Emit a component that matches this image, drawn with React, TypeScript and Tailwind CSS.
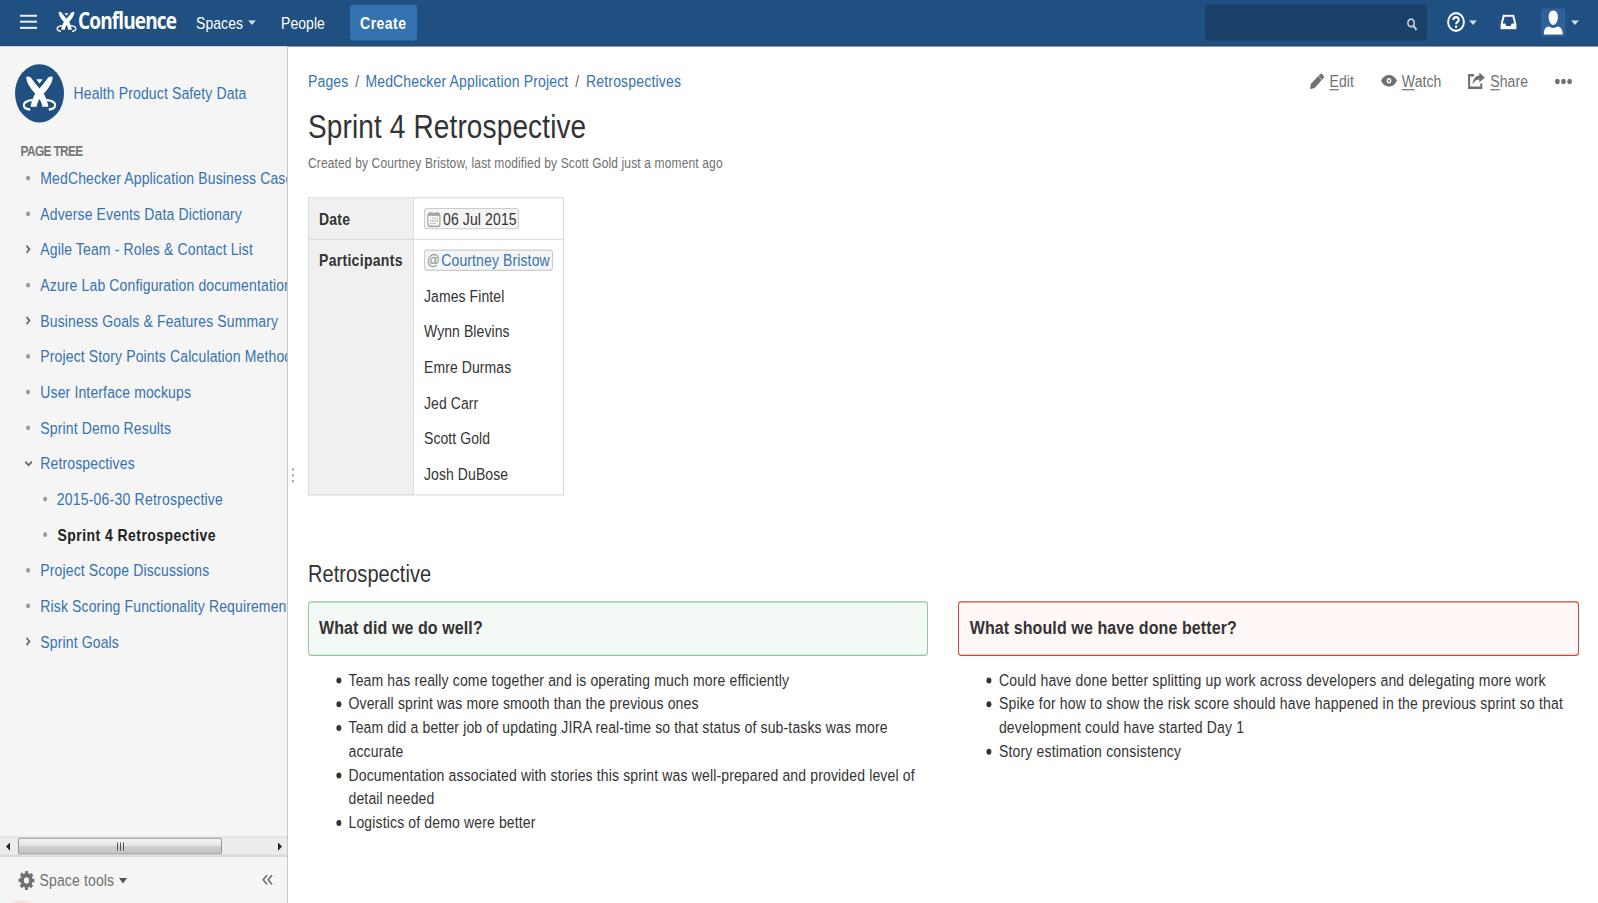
import React from "react";

type TreeItem = {
  label: string;
  kind: "leaf" | "closed" | "open";
  nested?: boolean;
  current?: boolean;
};

const tree: TreeItem[] = [
  { label: "MedChecker Application Business Case", kind: "leaf" },
  { label: "Adverse Events Data Dictionary", kind: "leaf" },
  { label: "Agile Team - Roles & Contact List", kind: "closed" },
  { label: "Azure Lab Configuration documentation", kind: "leaf" },
  { label: "Business Goals & Features Summary", kind: "closed" },
  { label: "Project Story Points Calculation Method", kind: "leaf" },
  { label: "User Interface mockups", kind: "leaf" },
  { label: "Sprint Demo Results", kind: "leaf" },
  { label: "Retrospectives", kind: "open" },
  { label: "2015-06-30 Retrospective", kind: "leaf", nested: true },
  { label: "Sprint 4 Retrospective", kind: "leaf", nested: true, current: true },
  { label: "Project Scope Discussions", kind: "leaf" },
  { label: "Risk Scoring Functionality Requirements", kind: "leaf" },
  { label: "Sprint Goals", kind: "closed" },
];

const participants = ["James Fintel", "Wynn Blevins", "Emre Durmas", "Jed Carr", "Scott Gold", "Josh DuBose"];

const wentWell = [
  "Team has really come together and is operating much more efficiently",
  "Overall sprint was more smooth than the previous ones",
  "Team did a better job of updating JIRA real-time so that status of sub-tasks was more accurate",
  "Documentation associated with stories this sprint was well-prepared and provided level of detail needed",
  "Logistics of demo were better",
];

const doBetter = [
  "Could have done better splitting up work across developers and delegating more work",
  "Spike for how to show the risk score should have happened in the previous sprint so that development could have started Day 1",
  "Story estimation consistency",
];

function Mark({ className }: { className: string }) {
  const limb = "M11.2 11.4Q11.8 9.6 15.9 11.3C18.6 14.8 21.8 18 25 20.8C29.4 24.8 32 29 33.4 35.8H27.4C26.6 32 25 29.4 21.6 26C16.4 21.4 12.2 17 11.2 11.4Z";
  const swirl = "M17.6 30.1C11 30.9 8.4 32.6 8.8 34.8C9.2 37 12 38 15.2 38.2";
  return (
    <svg viewBox="7 9 35 31" preserveAspectRatio="none" className={className} fill="#fff">
      <path d={limb} />
      <path d={limb} transform="translate(49 0) scale(-1 1)" />
      <path d={swirl} fill="none" stroke="#fff" strokeWidth="2" />
      <path d={swirl} fill="none" stroke="#fff" strokeWidth="2" transform="translate(49 0) scale(-1 1)" />
      <path d="M21.3 12.6H27.7L24.5 16.2Z" />
    </svg>
  );
}

function Caret({ className }: { className: string }) {
  return (
    <svg viewBox="0 0 8 4" preserveAspectRatio="none" className={className} fill="currentColor">
      <path d="M0 0H8L4 4Z" />
    </svg>
  );
}

function Marker({ kind }: { kind: TreeItem["kind"] }) {
  return (
    <svg viewBox="0 0 10 10" className="h-[10px] w-[10px] shrink-0">
      {kind === "leaf" && <circle cx="5.1" cy="5" r="2" fill="#999" />}
      {kind === "closed" && <path d="M3.5 1.8L6.5 4.8L3.5 7.8" fill="none" stroke="#666" strokeWidth="1.6" />}
      {kind === "open" && <path d="M2.3 3.6L5.6 6.6L8.9 3.6" fill="none" stroke="#666" strokeWidth="1.6" />}
    </svg>
  );
}

function Header() {
  return (
    <header className="flex h-[39.3px] shrink-0 items-start border-b border-[#2e4766] bg-[#205081] pt-[3.5px] text-white">
      <div className="flex h-[30px] w-full items-center">
        <svg viewBox="0 0 17 13" className="ml-[20px] h-[13px] w-[17px] shrink-0" fill="#e9eef3">
          <rect y="0.4" width="17" height="1.7" />
          <rect y="5.4" width="17" height="1.7" />
          <rect y="10.6" width="17" height="1.7" />
        </svg>
        <Mark className="ml-[19px] mt-[-1px] h-[18.5px] w-[21px] shrink-0" />
        <div className="ml-px w-[98px] shrink-0 whitespace-nowrap font-['Open_Sans',sans-serif] text-[19px] font-bold leading-[30px] tracking-[-0.87px]">
          <span className="relative top-[-1.5px]">Confluence</span>
        </div>
        <div className="ml-[20px] flex w-[60px] shrink-0 items-center justify-between">
          <span>Spaces</span>
          <Caret className="h-[4px] w-[8px] text-[#d4dde6]" />
        </div>
        <span className="ml-[25px] w-[45px] shrink-0">People</span>
        <div className="ml-[23.5px] flex h-[30px] w-[67.5px] shrink-0 items-center justify-center rounded-[3px] bg-[#3572b0] font-bold tracking-[0.45px]">
          Create
        </div>
        <div className="ml-auto flex h-[30px] w-[222px] shrink-0 items-center justify-end rounded-[3px] bg-[#1a4067] pr-[9px]">
          <svg viewBox="0 0 12 12" className="mt-[3px] h-[11px] w-[12px]" fill="none" stroke="#b9c6d3">
            <circle cx="5" cy="4.7" r="3.5" strokeWidth="1.8" />
            <path d="M7.5 7.3L11 11" strokeWidth="2.2" />
          </svg>
        </div>
        <svg viewBox="0 0 18 18" className="ml-[20px] h-[17px] w-[18px] shrink-0" fill="none" stroke="#fff" preserveAspectRatio="none">
          <circle cx="9" cy="9" r="7.9" strokeWidth="1.9" />
          <path d="M6.3 7.2C6.3 3.9 11.8 3.9 11.8 7C11.8 9 9.1 9 9.1 11" strokeWidth="2" />
          <path d="M9.1 12.2V14.2" strokeWidth="2.1" />
        </svg>
        <Caret className="ml-[4px] h-[4px] w-[8px] shrink-0 text-[#d4dde6]" />
        <svg viewBox="0 0 17 14" className="ml-[23.5px] h-[13px] w-[17px] shrink-0">
          <path fill="#fff" fillRule="evenodd" d="M2.5 0.5H14.5L17 9V13.5H0V9ZM4.3 2.2L2.3 8.3H5L6.2 10.6H10.8L12 8.3H14.7L12.7 2.2Z" />
        </svg>
        <svg viewBox="0 0 24 24" className="ml-[24px] h-[24px] w-[24.5px] shrink-0" preserveAspectRatio="none">
          <rect width="24" height="24" rx="3" fill="#2d6198" />
          <path fill="#fff" d="M12 1.8C15 1.8 16.7 4.2 16.5 7.6C16.3 11.2 14.5 14 12 14S7.7 11.2 7.5 7.6C7.3 4.2 9 1.8 12 1.8ZM2.8 22C2.9 17.5 4.5 15.7 8 15.4C9.6 17 14.4 17 16 15.4C19.5 15.7 21.1 17.5 21.2 22Z" />
        </svg>
        <Caret className="ml-[5px] mr-[19.5px] h-[4px] w-[8px] shrink-0 text-[#d4dde6]" />
      </div>
    </header>
  );
}

function ScrollBar() {
  return (
    <div className="flex h-[16px] shrink-0 items-center border-y border-[#dedede] bg-[#ececec]">
      <svg viewBox="0 0 4 8" preserveAspectRatio="none" className="ml-[6px] h-[7px] w-[4px]">
        <path d="M4 0V8L0 4Z" fill="#222" />
      </svg>
      <div className="ml-[8px] flex h-[14.5px] w-[204px] items-center justify-center gap-[2px] rounded-[2px] border border-[#979797] bg-[linear-gradient(#f4f4f4_0%,#e6e6e6_48%,#cfcfd1_52%,#c4c4c6_100%)]">
        <i className="h-[7px] w-px bg-[#555]" />
        <i className="h-[7px] w-px bg-[#555]" />
        <i className="h-[7px] w-px bg-[#555]" />
      </div>
      <svg viewBox="0 0 4 8" preserveAspectRatio="none" className="ml-auto mr-[5px] h-[7px] w-[4px]">
        <path d="M0 0V8L4 4Z" fill="#222" />
      </svg>
    </div>
  );
}

function Sidebar() {
  return (
    <aside className="relative flex w-[288px] shrink-0 flex-col overflow-hidden border-r border-[#c6c6c6] bg-[#f5f5f5]">
      <div className="flex items-center pl-[15px] pt-[14.8px]">
        <div className="flex h-[48.5px] w-[49px] items-center justify-center rounded-full bg-[#205081]">
          <Mark className="h-[31px] w-[35px]" />
        </div>
        <span className="ml-[9.5px] tracking-[0.13px] text-[#3572b0]">Health Product Safety Data</span>
      </div>
      <h2 className="mt-[14.2px] pl-[20.5px] text-[12px] font-bold leading-[20px] tracking-[-0.7px] text-[#777]">PAGE TREE</h2>
      <ul className="mt-[-1.5px] flex flex-col">
        {tree.map((item) => (
          <li
            key={item.label}
            className={
              item.nested
                ? "flex h-[30px] items-center whitespace-nowrap pl-[39.5px]"
                : "flex h-[30px] items-center whitespace-nowrap pl-[23px]"
            }
          >
            <Marker kind={item.kind} />
            <span
              className={
                item.current
                  ? "ml-[8px] font-bold tracking-[0.45px] text-[#222]"
                  : item.nested
                    ? "ml-[7.2px] tracking-[0.22px] text-[#3572b0]"
                    : "ml-[7.3px] tracking-[0.135px] text-[#3572b0]"
              }
            >
              {item.label}
            </span>
          </li>
        ))}
      </ul>
      <div className="mt-auto">
        <ScrollBar />
        <div className="flex h-[40px] items-center border-t border-[#ccc] pl-[18px] pr-[14px] text-[#707070]">
          <svg viewBox="0 0 16 16" className="h-[16px] w-[17px]" fill="none" stroke="#707070">
            <circle cx="8" cy="8" r="4.4" strokeWidth="3.6" />
            <circle cx="8" cy="8" r="6.7" strokeWidth="2.5" strokeDasharray="2.9 2.36" strokeDashoffset="1.45" />
          </svg>
          <span className="ml-[4.5px] tracking-[0.14px]">Space tools</span>
          <Caret className="ml-[5px] mt-[2px] h-[4.5px] w-[8px] text-[#555]" />
          <svg viewBox="0 0 11 9" className="ml-auto h-[9px] w-[11px]" fill="none" stroke="#707070" strokeWidth="1.5">
            <path d="M5 0.6L1.2 4.5L5 8.4M10 0.6L6.2 4.5L10 8.4" />
          </svg>
        </div>
      </div>
      <div className="absolute bottom-0 left-[8px] h-[3px] w-[26px] bg-[radial-gradient(ellipse_at_bottom,#fbd9cb_0%,#f5f5f5_75%)]" />
    </aside>
  );
}

function Action({ letter, rest, children }: { letter: string; rest: string; children: React.ReactNode }) {
  return (
    <div className="flex items-center gap-[5px]">
      {children}
      <span>
        <u className="underline-offset-2">{letter}</u>
        {rest}
      </span>
    </div>
  );
}

function Actions() {
  return (
    <div className="flex items-center pr-[7px] text-[#707070]">
      <Action letter="E" rest="dit">
        <svg viewBox="0 0 14 14" preserveAspectRatio="none" className="h-[13px] w-[14px]" fill="#707070">
          <path d="M0 14L0.8 9.4L8.2 2.2L11.8 5.8L4.6 13ZM8.6 1.8L10 0.5Q11.2 -0.4 12.2 0.6L13.5 1.9Q14.4 2.8 13.5 4L12.2 5.4Z" />
        </svg>
      </Action>
      <div className="w-[27px]" />
      <Action letter="W" rest="atch">
        <svg viewBox="0 0 16 10" className="h-[10px] w-[16px]">
          <path fill="#707070" fillRule="evenodd" d="M0 5C3.5 -1.6 12.5 -1.6 16 5C12.5 11.6 3.5 11.6 0 5ZM8 2.7A2.3 2.3 0 1 0 8 7.3A2.3 2.3 0 1 0 8 2.7Z" />
          <circle cx="8" cy="5" r="1" fill="#707070" />
        </svg>
      </Action>
      <div className="w-[27px]" />
      <Action letter="S" rest="hare">
        <svg viewBox="0 0 17 14" className="h-[14px] w-[17px]">
          <path d="M6 2.3H1.1V12.8H13.3V9" fill="none" stroke="#707070" strokeWidth="2" />
          <path d="M11.3 0L16.8 4.3L11.3 8.4V6C8.6 6 6.8 7 4.6 10C5 5.6 7.4 2.8 11.3 2.6Z" fill="#707070" />
        </svg>
      </Action>
      <svg viewBox="0 0 17 5" className="ml-[27px] h-[5px] w-[17px]" fill="#707070">
        <circle cx="2.4" cy="2.5" r="2.3" />
        <circle cx="8.5" cy="2.5" r="2.3" />
        <circle cx="14.6" cy="2.5" r="2.3" />
      </svg>
    </div>
  );
}

function MetaTable() {
  return (
    <table className="mt-[19.1px] w-[256px] table-fixed border-collapse text-[#333]">
      <tbody>
        <tr className="h-[35px]">
          <th className="w-[105px] border border-[#ddd] bg-[#f0f0f0] px-[10px] py-[7px] text-left tracking-[0.2px]">Date</th>
          <td className="border border-[#ddd] px-[10px] py-[7px]">
            <div className="flex h-[20px] items-center">
              <span className="flex h-[18px] items-center rounded-[3px] border border-[#ccc] bg-[#f5f5f5] pl-[2px] pr-px">
                <svg viewBox="0 0 14 13" className="mr-[2px] h-[13px] w-[14px]" fill="none" stroke="#999">
                  <rect x="0.9" y="1.5" width="12" height="11" rx="2" strokeWidth="1" />
                  <path d="M1 3H13M3.5 0.3V2M10.5 0.3V2" strokeWidth="1.2" />
                  <path d="M5.3 5.7H11M3.3 7.9H11M3.3 10.1H8.7" strokeWidth="1" strokeDasharray="1.1 1.1" />
                </svg>
                <span className="tracking-[0.12px]">06 Jul 2015</span>
              </span>
            </div>
          </td>
        </tr>
        <tr>
          <th className="border border-[#ddd] bg-[#f0f0f0] px-[10px] py-[7px] text-left align-top tracking-[0.3px]">Participants</th>
          <td className="border border-[#ddd] px-[10px] py-[7px]">
            <div className="flex flex-col gap-[10px]">
              <div className="flex h-[20px] items-center">
                <span className="flex h-[18px] items-center whitespace-nowrap rounded-[3px] border border-[#ccc] bg-[#f5f5f5] pl-[2px] pr-[2px]">
                  <span className="mr-[1.5px] text-[12.5px] text-[#8a8a8a]">@</span>
                  <span className="tracking-[0.12px] text-[#3572b0]">Courtney Bristow</span>
                </span>
              </div>
              {participants.map((name) => (
                <p key={name} className="tracking-[0.08px]">{name}</p>
              ))}
            </div>
          </td>
        </tr>
      </tbody>
    </table>
  );
}

function Column({ title, items, tone }: { title: string; items: string[]; tone: "good" | "bad" }) {
  return (
    <section className={tone === "good" ? "w-[620px]" : "w-[620.6px]"}>
      <h3
        className={
          tone === "good"
            ? "flex h-[45.8px] items-center rounded-[3px] border border-[#91c89c] bg-[#f3f9f4] pl-[10px] pt-[0.8px] text-[16px] font-bold tracking-[0.1px] text-[#333]"
            : "flex h-[45.8px] items-center rounded-[3px] border border-[#d04437] bg-[#fff8f7] pl-[10.3px] pt-[0.8px] text-[16px] font-bold tracking-[0.1px] text-[#333]"
        }
      >
        {title}
      </h3>
      <ul className={tone === "good" ? "mt-[9.9px] tracking-[0.145px]" : "mt-[9.9px] tracking-[0.175px]"}>
        {items.map((item) => (
          <li key={item} className="flex text-[#333]">
            <svg viewBox="0 0 6 20" className="ml-[28px] mr-[6.5px] h-[20px] w-[6px] shrink-0">
              <circle cx="2.9" cy="10.7" r="2.5" fill="#333" />
            </svg>
            <span>{item}</span>
          </li>
        ))}
      </ul>
    </section>
  );
}

export default function App() {
  return (
    <div className="h-[903px] w-[1598px] overflow-hidden bg-white">
      <div className="flex h-[760px] w-[1598px] origin-top-left scale-y-[1.1882] flex-col bg-white font-['Liberation_Sans',Arial,sans-serif] text-[14px] leading-[20px] tracking-[0.06px]">
        <Header />
        <div className="flex min-h-0 flex-1">
          <Sidebar />
          <div className="flex w-[20px] shrink-0 flex-col items-start gap-[3px] pl-[4px] pt-[355px]">
            <i className="h-[2px] w-[2px] bg-[#aaa]" />
            <i className="h-[2px] w-[2px] bg-[#aaa]" />
            <i className="h-[2px] w-[2px] bg-[#aaa]" />
          </div>
          <main className="w-[1271px] shrink-0 pt-[19px]">
            <div className="flex items-center justify-between">
              <nav className="flex gap-[7px] tracking-[0.13px] text-[#3572b0]">
                <span>Pages</span>
                <span className="text-[#666]">/</span>
                <span className="ml-[-1px] tracking-[0.15px]">MedChecker Application Project</span>
                <span className="text-[#666]">/</span>
                <span className="ml-[-0.4px] tracking-[0.18px]">Retrospectives</span>
              </nav>
              <Actions />
            </div>
            <h1 className="mt-[11px] text-[28px] leading-[36px] tracking-[0.13px] text-[#333]">Sprint 4 Retrospective</h1>
            <p className="mt-[1.7px] text-[12px] tracking-[0.142px] text-[#707070]">
              Created by Courtney Bristow, last modified by Scott Gold just a moment ago
            </p>
            <MetaTable />
            <h2 className="mt-[51px] text-[20px] leading-[30px] tracking-[0.08px] text-[#333]">Retrospective</h2>
            <div className="mt-[8.1px] flex justify-between">
              <Column title="What did we do well?" items={wentWell} tone="good" />
              <Column title="What should we have done better?" items={doBetter} tone="bad" />
            </div>
          </main>
        </div>
      </div>
    </div>
  );
}
